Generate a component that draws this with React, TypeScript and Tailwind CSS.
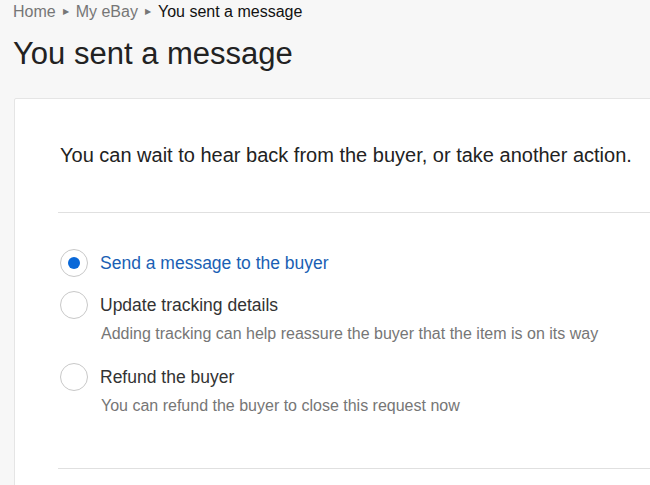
import React from "react";

type Option = { label: string; hint?: string; selected?: boolean };

const options: Option[] = [
  { label: "Send a message to the buyer", selected: true },
  {
    label: "Update tracking details",
    hint: "Adding tracking can help reassure the buyer that the item is on its way",
  },
  { label: "Refund the buyer", hint: "You can refund the buyer to close this request now" },
];

function Radio({ checked }: { checked?: boolean }) {
  return (
    <span className="flex h-[28px] w-[28px] shrink-0 items-center justify-center rounded-full border border-[#c8c8c8] bg-white">
      {checked && <span className="h-[12px] w-[12px] rounded-full bg-[#0968d8]" />}
    </span>
  );
}

export default function App() {
  return (
    <div
      className="h-[485px] w-[650px] overflow-hidden bg-[#f7f7f7] text-[#333]"
      style={{ fontFamily: '"Liberation Sans", Arial, sans-serif' }}
    >
      {/* Breadcrumb */}
      <nav className="flex items-center pl-[13px] pt-[2px] text-[16px] leading-[20px]">
        <span className="text-[#767676]">Home</span>
        <span className="mx-[7px] text-[8px] text-[#767676]">▶</span>
        <span className="text-[#767676]">My eBay</span>
        <span className="mx-[7px] text-[8px] text-[#767676]">▶</span>
        <span className="text-[#111]">You sent a message</span>
      </nav>

      <h1 className="pl-[13px] pt-[12px] text-[31px] leading-[40px] font-normal text-[#222]">
        You sent a message
      </h1>

      {/* Card */}
      <div className="ml-[14px] mt-[24px] w-[700px] rounded-[2px] border border-[#e5e5e5] bg-white pl-[45px] pb-[40px]">
        <p className="pt-[44px] pb-[45px] text-[20px] leading-[24px] text-[#222]">
          You can wait to hear back from the buyer, or take another action.
        </p>
        <div className="-ml-[2px] border-t border-[#e0e0e0]" />

        <div className="flex flex-col gap-[8px] pt-[33px] pb-[44px]">
          {options.map((o) => (
            <div key={o.label} className="flex flex-col">
              <div className="flex items-center gap-[12px]">
                <Radio checked={o.selected} />
                <span
                  className={`text-[17.5px] leading-[34px] ${
                    o.selected ? "text-[#1a5fb4]" : "text-[#333]"
                  }`}
                >
                  {o.label}
                </span>
              </div>
              {o.hint && (
                <span className="mb-[6px] pl-[41px] text-[16px] leading-[24px] text-[#767676]">
                  {o.hint}
                </span>
              )}
            </div>
          ))}
        </div>
        <div className="-ml-[2px] border-t border-[#e0e0e0]" />
      </div>
    </div>
  );
}
